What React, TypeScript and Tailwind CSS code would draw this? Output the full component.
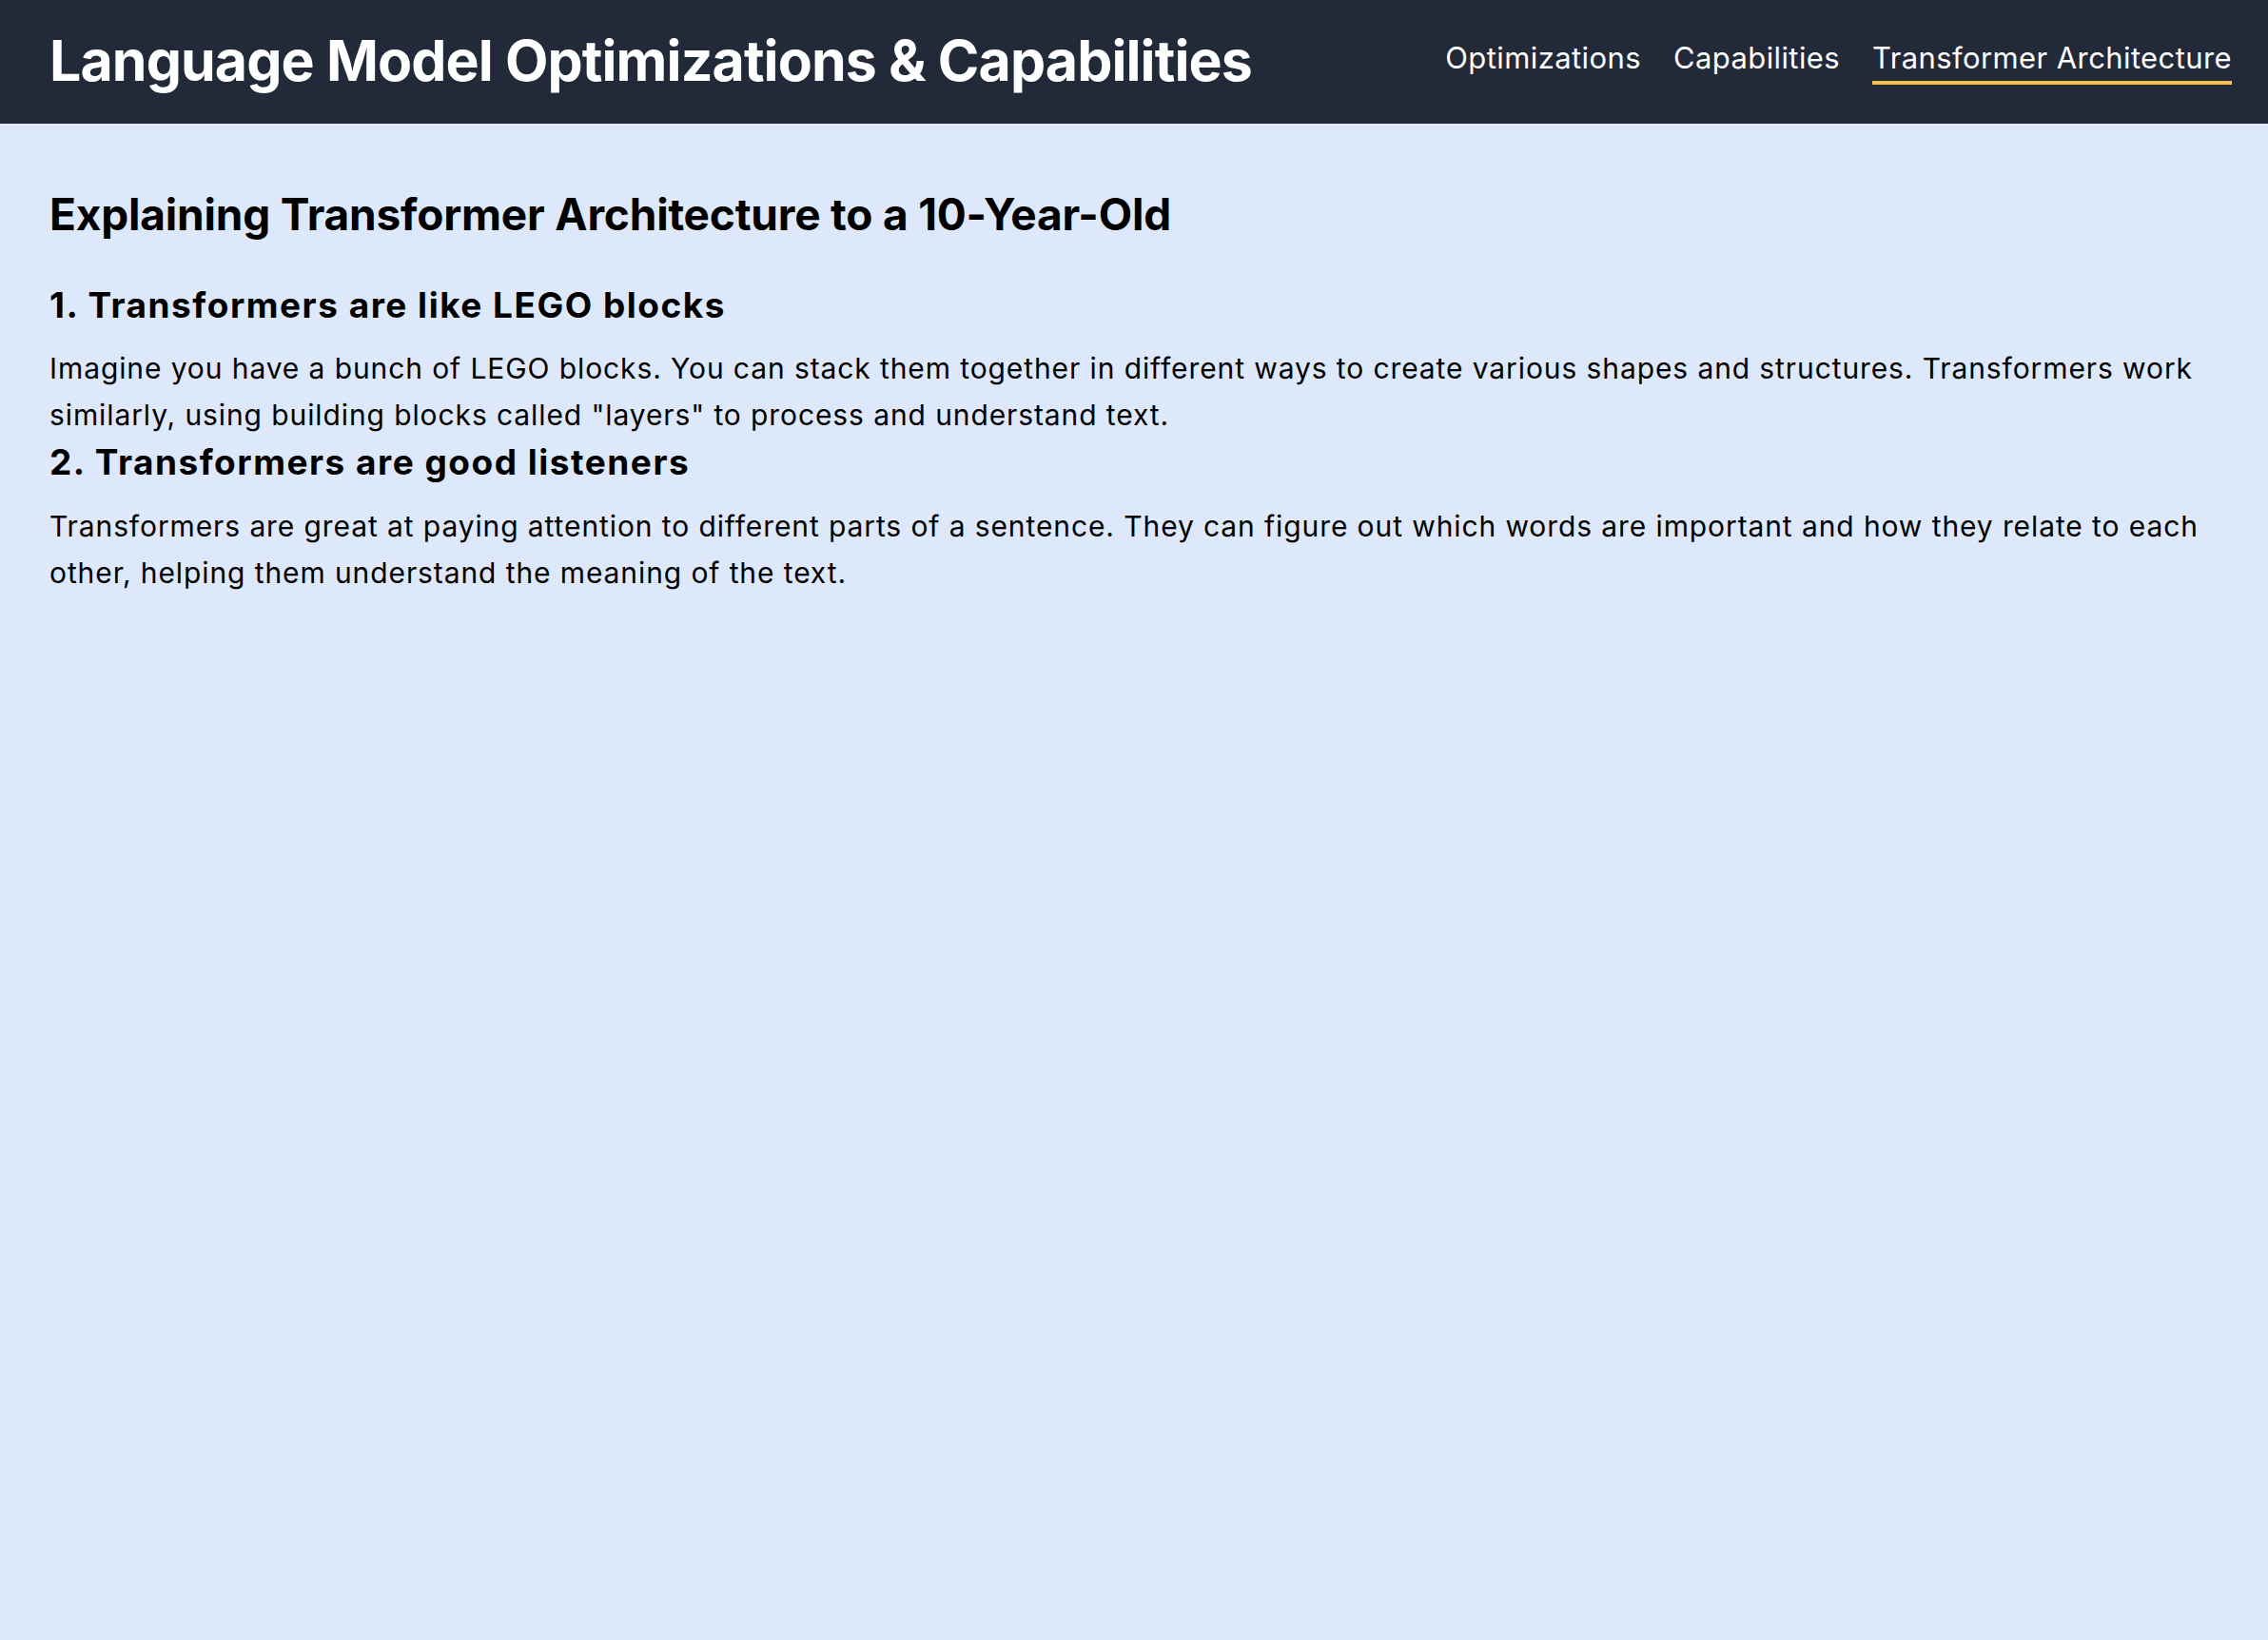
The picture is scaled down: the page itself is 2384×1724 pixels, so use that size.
export default function App() {
  const links = ["Optimizations", "Capabilities", "Transformer Architecture"];
  const active = "Transformer Architecture";

  return (
    <div className="min-h-screen bg-[#dde8fb] font-['Inter','Liberation_Sans',sans-serif] text-black">
      {/* Header */}
      <header className="h-[130px] bg-[#222938] pl-[52px] pr-[38px] flex items-center justify-between">
        <h1 className="text-white text-[59px] font-bold tracking-[-0.9px] leading-none pb-[3px]">
          Language Model Optimizations &amp; Capabilities
        </h1>
        <nav className="flex items-center gap-[34px] pb-[4px]">
          {links.map((l) => (
            <a
              key={l}
              href="#"
              className={`text-white text-[31px] tracking-[0.4px] leading-[45px] pb-[2px] border-b-4 ${
                l === active ? "border-[#f4c14a]" : "border-transparent"
              }`}
            >
              {l}
            </a>
          ))}
        </nav>
      </header>

      {/* Content */}
      <main className="px-[52px] pt-[68px]">
        <h2 className="text-[46px] font-bold leading-[55px] tracking-[-0.2px] mb-[45px]">
          Explaining Transformer Architecture to a 10-Year-Old
        </h2>

        <section>
          <h3 className="text-[37px] font-bold leading-[45px] tracking-[1.5px] mb-[20px]">
            1. Transformers are like LEGO blocks
          </h3>
          <p className="text-[30px] leading-[49px] tracking-[0.9px]">
            Imagine you have a bunch of LEGO blocks. You can stack them together in different ways to create
            various shapes and structures. Transformers work similarly, using building blocks called "layers" to
            process and understand text.
          </p>
        </section>

        <section>
          <h3 className="text-[37px] font-bold leading-[45px] tracking-[1.5px] mb-[21px] mt-[2px]">
            2. Transformers are good listeners
          </h3>
          <p className="text-[30px] leading-[49px] tracking-[0.9px]">
            Transformers are great at paying attention to different parts of a sentence. They can figure out which
            words are important and how they relate to each other, helping them understand the meaning of the text.
          </p>
        </section>
      </main>
    </div>
  );
}
